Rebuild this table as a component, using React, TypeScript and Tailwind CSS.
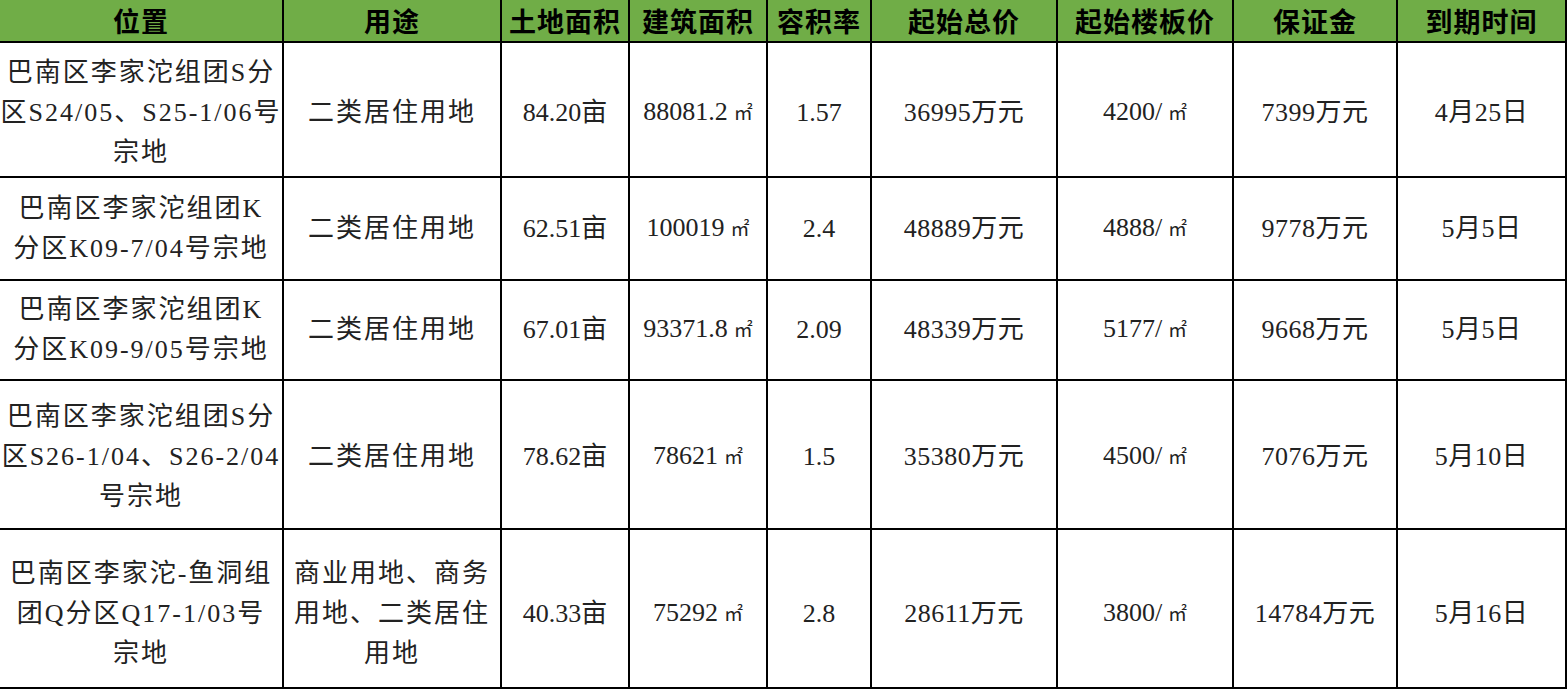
import React from "react";

type Row = {
  loc: string[];
  use: string[];
  land: string;
  build: string;
  ratio: string;
  total: string;
  floor: string;
  deposit: string;
  due: string;
  h: string;
  pad: string;
};

const headers = ["位置", "用途", "土地面积", "建筑面积", "容积率", "起始总价", "起始楼板价", "保证金", "到期时间"];
const widths = ["w-[283px]", "w-[218px]", "w-[128px]", "w-[138px]", "w-[104px]", "w-[186px]", "w-[176px]", "w-[164px]", "w-[169px]"];

const rows: Row[] = [
  {
    loc: ["巴南区李家沱组团S分", "区S24/05、S25-1/06号", "宗地"],
    use: ["二类居住用地"],
    land: "84.20亩",
    build: "88081.2",
    ratio: "1.57",
    total: "36995万元",
    floor: "4200/",
    deposit: "7399万元",
    due: "4月25日",
    h: "h-[135px]",
    pad: "pt-[6px]",
  },
  {
    loc: ["巴南区李家沱组团K", "分区K09-7/04号宗地"],
    use: ["二类居住用地"],
    land: "62.51亩",
    build: "100019",
    ratio: "2.4",
    total: "48889万元",
    floor: "4888/",
    deposit: "9778万元",
    due: "5月5日",
    h: "h-[103px]",
    pad: "pt-0",
  },
  {
    loc: ["巴南区李家沱组团K", "分区K09-9/05号宗地"],
    use: ["二类居住用地"],
    land: "67.01亩",
    build: "93371.8",
    ratio: "2.09",
    total: "48339万元",
    floor: "5177/",
    deposit: "9668万元",
    due: "5月5日",
    h: "h-[100px]",
    pad: "pt-0",
  },
  {
    loc: ["巴南区李家沱组团S分", "区S26-1/04、S26-2/04", "号宗地"],
    use: ["二类居住用地"],
    land: "78.62亩",
    build: "78621",
    ratio: "1.5",
    total: "35380万元",
    floor: "4500/",
    deposit: "7076万元",
    due: "5月10日",
    h: "h-[149px]",
    pad: "pt-[4px]",
  },
  {
    loc: ["巴南区李家沱-鱼洞组", "团Q分区Q17-1/03号", "宗地"],
    use: ["商业用地、商务", "用地、二类居住", "用地"],
    land: "40.33亩",
    build: "75292",
    ratio: "2.8",
    total: "28611万元",
    floor: "3800/",
    deposit: "14784万元",
    due: "5月16日",
    h: "h-[159px]",
    pad: "pt-[10px]",
  },
];

function Sqm() {
  return <span className="ml-[6px] text-[19px] align-baseline">㎡</span>;
}

function Lines({ lines }: { lines: string[] }) {
  return (
    <>
      {lines.map((l, i) => (
        <div key={i} className="whitespace-nowrap tracking-[2px]">
          {l}
        </div>
      ))}
    </>
  );
}

export default function App() {
  const base = "border-2 border-black text-center align-middle px-0";
  return (
    <div className="w-[1568px] h-[690px] bg-white overflow-hidden">
      <table
        className="table-fixed border-collapse w-[1566px] text-[#222]"
        style={{ fontFamily: '"Liberation Serif", "Noto Sans CJK SC", serif' }}
      >
        <thead>
          <tr className="h-[42px] bg-[#70ad47]">
            {headers.map((h, i) => (
              <th
                key={h}
                className={`${widths[i]} border-2 border-black border-t-0 ${i === 0 ? "border-l-0" : ""} text-center text-[27px] font-bold text-black leading-none tracking-[1px]`}
                style={{ fontFamily: '"Noto Sans CJK SC", "Noto Sans", sans-serif' }}
              >
                {h}
              </th>
            ))}
          </tr>
        </thead>
        <tbody className="text-[26px] leading-[40px]">
          {rows.map((r, i) => {
            const cell = `${base} ${r.pad}`;
            return (
              <tr key={i} className={r.h}>
                <td className={`${cell} border-l-0`}>
                  <Lines lines={r.loc} />
                </td>
                <td className={cell}>
                  <Lines lines={r.use} />
                </td>
                <td className={cell}>{r.land}</td>
                <td className={cell}>
                  {r.build}
                  <Sqm />
                </td>
                <td className={cell}>{r.ratio}</td>
                <td className={`${cell} tracking-[0.5px]`}>{r.total}</td>
                <td className={cell}>
                  {r.floor}
                  <Sqm />
                </td>
                <td className={`${cell} tracking-[0.5px]`}>{r.deposit}</td>
                <td className={`${cell} tracking-[0.5px]`}>{r.due}</td>
              </tr>
            );
          })}
        </tbody>
      </table>
    </div>
  );
}
